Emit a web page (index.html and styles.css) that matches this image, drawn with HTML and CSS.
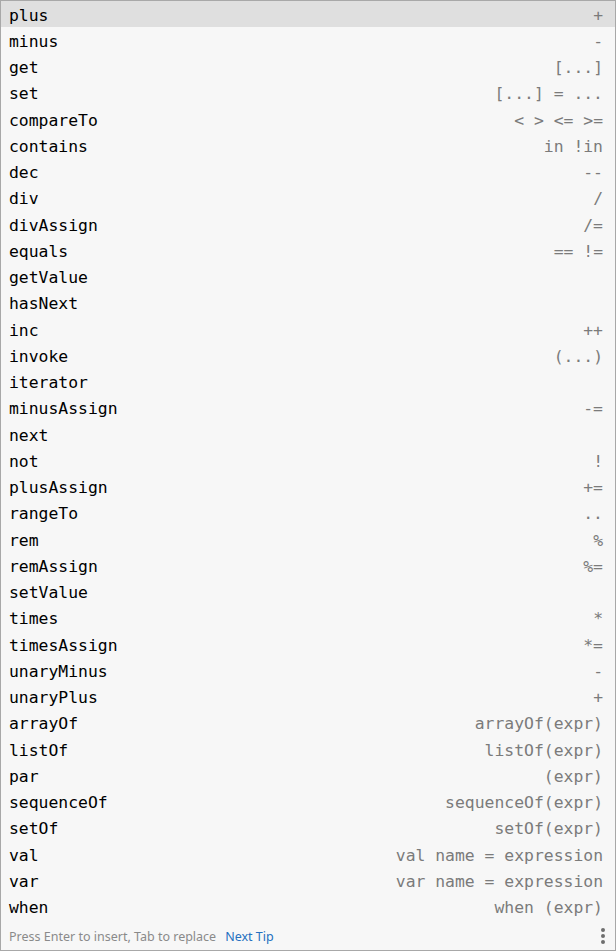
FILE: index.html
```html
<!DOCTYPE html>
<html>
<head>
<meta charset="utf-8">
<link rel="stylesheet" href="styles.css">
</head>
<body>
<div class="popup">
  <ul class="list">
    <li class="row selected"><span class="name">plus</span><span class="hint">+</span></li>
    <li class="row"><span class="name">minus</span><span class="hint">-</span></li>
    <li class="row"><span class="name">get</span><span class="hint">[...]</span></li>
    <li class="row"><span class="name">set</span><span class="hint">[...] = ...</span></li>
    <li class="row"><span class="name">compareTo</span><span class="hint">&lt; &gt; &lt;= &gt;=</span></li>
    <li class="row"><span class="name">contains</span><span class="hint">in !in</span></li>
    <li class="row"><span class="name">dec</span><span class="hint">--</span></li>
    <li class="row"><span class="name">div</span><span class="hint">/</span></li>
    <li class="row"><span class="name">divAssign</span><span class="hint">/=</span></li>
    <li class="row"><span class="name">equals</span><span class="hint">== !=</span></li>
    <li class="row"><span class="name">getValue</span><span class="hint"></span></li>
    <li class="row"><span class="name">hasNext</span><span class="hint"></span></li>
    <li class="row"><span class="name">inc</span><span class="hint">++</span></li>
    <li class="row"><span class="name">invoke</span><span class="hint">(...)</span></li>
    <li class="row"><span class="name">iterator</span><span class="hint"></span></li>
    <li class="row"><span class="name">minusAssign</span><span class="hint">-=</span></li>
    <li class="row"><span class="name">next</span><span class="hint"></span></li>
    <li class="row"><span class="name">not</span><span class="hint">!</span></li>
    <li class="row"><span class="name">plusAssign</span><span class="hint">+=</span></li>
    <li class="row"><span class="name">rangeTo</span><span class="hint">..</span></li>
    <li class="row"><span class="name">rem</span><span class="hint">%</span></li>
    <li class="row"><span class="name">remAssign</span><span class="hint">%=</span></li>
    <li class="row"><span class="name">setValue</span><span class="hint"></span></li>
    <li class="row"><span class="name">times</span><span class="hint">*</span></li>
    <li class="row"><span class="name">timesAssign</span><span class="hint">*=</span></li>
    <li class="row"><span class="name">unaryMinus</span><span class="hint">-</span></li>
    <li class="row"><span class="name">unaryPlus</span><span class="hint">+</span></li>
    <li class="row"><span class="name">arrayOf</span><span class="hint">arrayOf(expr)</span></li>
    <li class="row"><span class="name">listOf</span><span class="hint">listOf(expr)</span></li>
    <li class="row"><span class="name">par</span><span class="hint">(expr)</span></li>
    <li class="row"><span class="name">sequenceOf</span><span class="hint">sequenceOf(expr)</span></li>
    <li class="row"><span class="name">setOf</span><span class="hint">setOf(expr)</span></li>
    <li class="row"><span class="name">val</span><span class="hint">val name = expression</span></li>
    <li class="row"><span class="name">var</span><span class="hint">var name = expression</span></li>
    <li class="row"><span class="name">when</span><span class="hint">when (expr)</span></li>
  </ul>
  <div class="footer">
    <span class="tip">Press Enter to insert, Tab to replace</span>
    <span class="next">Next Tip</span>
    <span class="more" aria-label="more"><i></i><i></i><i></i></span>
  </div>
</div>
</body>
</html>
```

FILE: styles.css
```css
html, body {
  margin: 0;
  padding: 0;
  background: #f7f7f7;
}

.popup {
  box-sizing: border-box;
  width: 616px;
  height: 951px;
  border: 1px solid #a8a8a8;
  background: #f7f7f7;
  display: flex;
  flex-direction: column;
}

.list {
  list-style: none;
  margin: 0;
  padding: 0;
}

.row {
  box-sizing: border-box;
  height: 26.25px;
  display: flex;
  align-items: center;
  justify-content: space-between;
  padding: 2px 12px 0 8px;
  font-family: "DejaVu Sans Mono", "Liberation Mono", monospace;
  font-size: 16.4px;
  white-space: pre;
}

.row.selected {
  background: #dfdfdf;
}

.name {
  color: #000000;
}

.hint {
  color: #7b7b7b;
}

.footer {
  flex: 1;
  display: flex;
  align-items: center;
  padding: 3px 10px 0 8px;
  font-family: "Noto Sans", "Open Sans", sans-serif;
  font-size: 12.5px;
}

.tip {
  color: #8a8a8a;
}

.next {
  color: #2470c0;
  margin-left: 9px;
}

.more {
  margin-left: auto;
  display: flex;
  flex-direction: column;
  gap: 2px;
  padding-top: 0;
}

.more i {
  display: block;
  width: 4px;
  height: 4px;
  border-radius: 50%;
  background: #6e6e6e;
}
```
